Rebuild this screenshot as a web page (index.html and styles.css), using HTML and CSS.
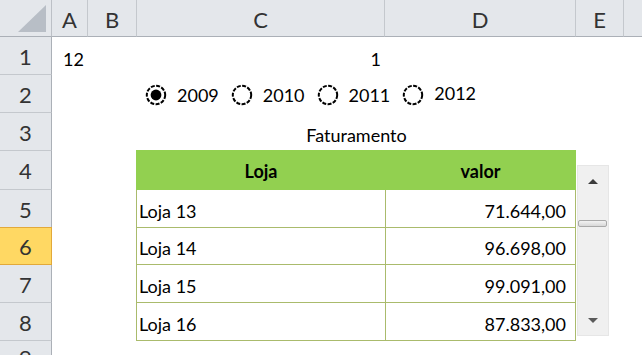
FILE: index.html
```html
<!DOCTYPE html>
<html lang="pt">
<head>
<meta charset="utf-8">
<title>Faturamento</title>
<link rel="stylesheet" href="styles.css">
</head>
<body>
<div class="sheet">
  <div class="corner hdr">
    <svg class="corner-tri" width="51" height="36" viewBox="0 0 51 36"><polygon points="18,32 46,5 46,32" fill="#b8bec6"/></svg>
  </div>
  <div class="hdr col">A</div>
  <div class="hdr col">B</div>
  <div class="hdr col">C</div>
  <div class="hdr col">D</div>
  <div class="hdr col">E</div>
  <div class="hdr col last"></div>

  <div class="hdr rowh r1">1</div>
  <div class="hdr rowh r2">2</div>
  <div class="hdr rowh r3">3</div>
  <div class="hdr rowh r4">4</div>
  <div class="hdr rowh r5">5</div>
  <div class="hdr rowh r6 sel">6</div>
  <div class="hdr rowh r7">7</div>
  <div class="hdr rowh r8">8</div>
  <div class="hdr rowh r9">9</div>

  <div class="cell num a1">12</div>
  <div class="cell num c1">1</div>

  <div class="radios">
    <div class="radio"><svg width="22" height="22" viewBox="0 0 22 22"><circle cx="11" cy="11" r="9.2" fill="#fff" stroke="#000" stroke-width="2" stroke-dasharray="4 1.4"/><circle cx="11" cy="11" r="5.4" fill="#000"/></svg><span>2009</span></div>
    <div class="radio"><svg width="22" height="22" viewBox="0 0 22 22"><circle cx="11" cy="11" r="9.2" fill="#fff" stroke="#000" stroke-width="2" stroke-dasharray="4 1.4"/></svg><span>2010</span></div>
    <div class="radio"><svg width="22" height="22" viewBox="0 0 22 22"><circle cx="11" cy="11" r="9.2" fill="#fff" stroke="#000" stroke-width="2" stroke-dasharray="4 1.4"/></svg><span>2011</span></div>
    <div class="radio up"><svg width="22" height="22" viewBox="0 0 22 22"><circle cx="11" cy="11" r="9.2" fill="#fff" stroke="#000" stroke-width="2" stroke-dasharray="4 1.4"/></svg><span>2012</span></div>
  </div>

  <div class="cell title">Faturamento</div>

  <div class="table">
    <div class="th h">Loja</div>
    <div class="th h">valor</div>
    <div class="td">Loja 13</div>
    <div class="td val">71.644,00</div>
    <div class="td s">Loja 14</div>
    <div class="td val s">96.698,00</div>
    <div class="td">Loja 15</div>
    <div class="td val">99.091,00</div>
    <div class="td">Loja 16</div>
    <div class="td val">87.833,00</div>
  </div>

  <div class="scrollbar">
    <div class="arrow up-arrow"></div>
    <div class="thumb"></div>
    <div class="arrow down-arrow"></div>
  </div>
</div>
</body>
</html>
```

FILE: styles.css
```css
html, body {
  margin: 0;
  padding: 0;
  background: #fff;
  overflow: hidden;
}

body {
  font-family: Lato, "Open Sans", sans-serif;
  color: #000;
}

.sheet {
  position: relative;
  width: 642px;
  height: 355px;
  display: grid;
  grid-template-columns: 52px 36px 49px 248px 191px 48px 1fr;
  grid-template-rows: 37px 38px 38px 38px 39px 38px 37px 38px 38px 1fr;
  overflow: hidden;
}

.hdr {
  background: #e4e7eb;
  color: #333;
  font-size: 22px;
  box-sizing: border-box;
  display: flex;
  align-items: center;
  justify-content: center;
}

.corner {
  grid-column: 1;
  grid-row: 1;
  border-right: 1px solid #bcc0c6;
  border-bottom: 1px solid #abb0b7;
  position: relative;
}

.corner-tri {
  position: absolute;
  left: 0;
  top: 0;
}

.col {
  grid-row: 1;
  border-right: 1px solid #c4c8cd;
  border-bottom: 1px solid #abb0b7;
  padding-top: 3px;
}

.col.last {
  border-right: none;
}

.rowh {
  grid-column: 1;
  border-right: 1px solid #abb0b7;
  border-bottom: 1px solid #c4c8cd;
  padding-top: 1px;
}

.r1 { grid-row: 2; }
.r2 { grid-row: 3; }
.r3 { grid-row: 4; }
.r4 { grid-row: 5; }
.r5 { grid-row: 6; }
.r6 { grid-row: 7; }
.r7 { grid-row: 8; }
.r8 { grid-row: 9; }
.r9 { grid-row: 10; align-items: flex-start; padding-top: 3px; }

.rowh.sel {
  background: #ffd863;
  border-right: 1px solid #e2a93a;
  border-bottom: 1px solid #e2a93a;
  margin-top: -1px;
  border-top: 1px solid #e2a93a;
}

.cell {
  font-size: 18px;
  line-height: 22px;
  display: flex;
  align-items: flex-end;
  padding-bottom: 5px;
  box-sizing: border-box;
}

.num {
  justify-content: flex-end;
  padding-right: 4px;
}

.a1 { grid-column: 2; grid-row: 2; }
.c1 { grid-column: 4; grid-row: 2; }

.title {
  grid-column: 4 / span 2;
  grid-row: 4;
  justify-content: center;
}

.radios {
  grid-column: 4 / span 3;
  grid-row: 3;
  display: flex;
  align-items: center;
  gap: 12px;
  padding-left: 8px;
  padding-top: 2px;
  font-size: 18px;
}

.radio {
  display: flex;
  align-items: center;
  gap: 10px;
}

.radio svg {
  display: block;
}

.radio.up span {
  position: relative;
  top: -2px;
}

.table {
  grid-column: 4 / span 2;
  grid-row: 5 / span 5;
  margin-left: -1px;
  margin-top: -1px;
  display: grid;
  grid-template-columns: 249px 191px;
  grid-template-rows: 39px 38px 37px 38px 38px;
  border-top: 1px solid #92d050;
  align-self: start;
  font-size: 18px;
  line-height: 22px;
}

.th, .td {
  box-sizing: border-box;
  border-bottom: 1px solid #aabb6c;
  display: flex;
  align-items: flex-end;
  padding-bottom: 5px;
}

.th {
  background: #92d050;
  font-weight: 700;
  justify-content: center;
  border-bottom-color: #92d050;
  align-items: center;
  padding-bottom: 0;
  padding-top: 1px;
}

.td {
  border-left: 1px solid #aabb6c;
  padding-left: 2px;
}

.td.val {
  justify-content: flex-end;
  padding-right: 9px;
  border-right: 1px solid #aabb6c;
}

.th + .th {
  border-left: 1px solid #92d050;
}

.th:first-child {
  border-left: 1px solid #92d050;
}

.th:nth-child(2) {
  border-right: 1px solid #92d050;
}

.scrollbar {
  position: absolute;
  left: 577px;
  top: 165px;
  width: 32px;
  height: 171px;
  box-sizing: border-box;
  background: #f0f0f0;
  border: 1px solid #e6e6e6;
}

.arrow {
  position: absolute;
  left: 10px;
  width: 0;
  height: 0;
  border-left: 5px solid transparent;
  border-right: 5px solid transparent;
}

.up-arrow {
  top: 13px;
  border-bottom: 5px solid #3c3c3c;
}

.down-arrow {
  top: 152px;
  border-top: 5px solid #5a5a5a;
}

.thumb {
  position: absolute;
  left: 0;
  top: 54px;
  width: 29px;
  height: 7px;
  box-sizing: border-box;
  border: 1px solid #a9a9a9;
  border-radius: 2px;
  background: linear-gradient(#f2f2f2, #d8d8d8);
}
```
